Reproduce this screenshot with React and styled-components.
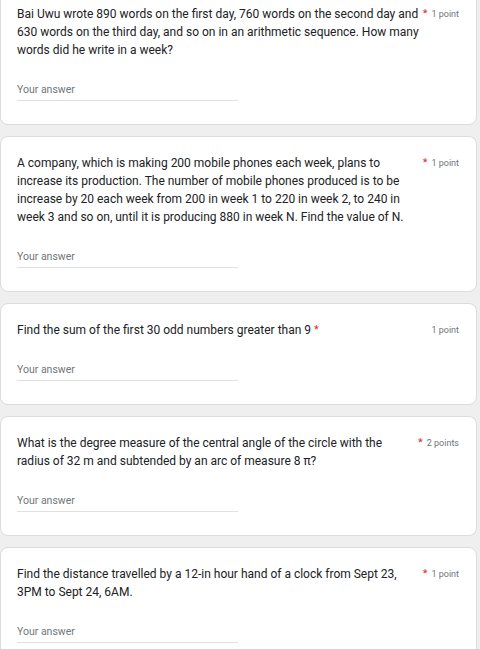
import React from 'react';
import styled, { createGlobalStyle } from 'styled-components';

const GlobalStyle = createGlobalStyle`
  html, body {
    margin: 0;
    padding: 0;
    background: #efefef;
  }
  body {
    font-family: Roboto, "Liberation Sans", Arial, sans-serif;
    color: #202124;
    overflow: hidden;
  }
`;

const FormList = styled.div`
  display: flex;
  flex-direction: column;
  gap: 11px;
  margin-top: -13px;
  width: 477px;
`;

const Card = styled.div`
  background: #fff;
  border: 1px solid #dadce0;
  border-radius: 8px;
  padding: 17px 17px 23px 16px;
`;

const Header = styled.div`
  display: flex;
  align-items: flex-start;
`;

const Title = styled.div`
  flex: 0 1 auto;
  min-width: 0;
  font-size: 12px;
  line-height: 18px;
`;

const Asterisk = styled.span`
  flex: none;
  color: #d93025;
  font-size: 11px;
  line-height: 18px;
  margin-left: 3px;
`;

const Points = styled.span`
  flex: none;
  margin-left: auto;
  padding-left: 4px;
  font-size: 9px;
  line-height: 18px;
  color: #70757a;
`;

const Answer = styled.div`
  box-sizing: border-box;
  margin-top: 18px;
  width: 50%;
  height: 24px;
  padding-bottom: 4px;
  border-bottom: 1px solid #e0e0e0;
  display: flex;
  align-items: flex-end;
  font-size: 10.5px;
  line-height: 12px;
  color: #70757a;
`;

const questions = [
  {
    text: 'Bai Uwu wrote 890 words on the first day, 760 words on the second day and 630 words on the third day, and so on in an arithmetic sequence. How many words did he write in a week?',
    points: '1 point',
  },
  {
    text: 'A company, which is making 200 mobile phones each week, plans to increase its production. The number of mobile phones produced is to be increase by 20 each week from 200 in week 1 to 220 in week 2, to 240 in week 3 and so on, until it is producing 880 in week N. Find the value of N.',
    points: '1 point',
  },
  {
    text: 'Find the sum of the first 30 odd numbers greater than 9',
    points: '1 point',
  },
  {
    text: 'What is the degree measure of the central angle of the circle with the radius of 32 m and subtended by an arc of measure 8 \u03c0?',
    points: '2 points',
  },
  {
    text: 'Find the distance travelled by a 12-in hour hand of a clock from Sept 23, 3PM to Sept 24, 6AM.',
    points: '1 point',
  },
];

function Question({ text, points }) {
  return (
    <Card>
      <Header>
        <Title>{text}</Title>
        <Asterisk>*</Asterisk>
        <Points>{points}</Points>
      </Header>
      <Answer>Your answer</Answer>
    </Card>
  );
}

export default function App() {
  return (
    <>
      <GlobalStyle />
      <FormList>
        {questions.map((q, i) => (
          <Question key={i} text={q.text} points={q.points} />
        ))}
      </FormList>
    </>
  );
}
